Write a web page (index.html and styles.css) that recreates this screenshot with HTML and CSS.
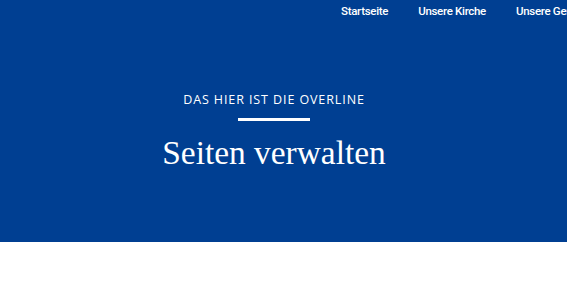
FILE: index.html
```html
<!DOCTYPE html>
<html lang="de">
<head>
    <meta charset="UTF-8">
    <meta name="viewport" content="width=device-width, initial-scale=1.0">
    <title>Seiten verwalten</title>
    <link rel="stylesheet" href="styles.css">
</head>
<body>

    <header class="hero">
        <nav class="main-nav">
            <a href="#">Startseite</a>
            <a href="#">Unsere Kirche</a>
            <a href="#">Unsere Gemeinden</a>
        </nav>

        <div class="hero-content">
            <p class="overline">Das hier ist die Overline</p>
            <span class="divider"></span>
            <h1>Seiten verwalten</h1>
        </div>
    </header>

    <main class="content"></main>

</body>
</html>
```

FILE: styles.css
```css
* {
    margin: 0;
    padding: 0;
    box-sizing: border-box;
}
body {
    font-family: 'Open Sans', sans-serif;
    background-color: #fff;
    color: #fff;
    overflow: hidden;
}
.hero {
    background-color: #003f92;
    height: 242px;
}
.main-nav {
    display: flex;
    gap: 30px;
    padding: 3px 0 0 341px;
    white-space: nowrap;
    overflow: hidden;
}
.main-nav a {
    font-family: Roboto, sans-serif;
    font-size: 11.5px;
    font-weight: 500;
    letter-spacing: -0.3px;
    line-height: 16px;
    color: #fff;
    text-decoration: none;
}
.hero-content {
    display: flex;
    flex-direction: column;
    align-items: center;
    width: 548px;
    padding-top: 72px;
}
.overline {
    font-size: 12.5px;
    letter-spacing: 0.9px;
    line-height: 18px;
    text-transform: uppercase;
}
.divider {
    display: block;
    width: 72px;
    height: 3px;
    background-color: #fff;
    margin-top: 9px;
}
h1 {
    font-family: 'Liberation Serif', serif;
    font-size: 33.4px;
    font-weight: 400;
    line-height: 40px;
    margin-top: 12px;
}
.content {
    height: 42px;
}
```
